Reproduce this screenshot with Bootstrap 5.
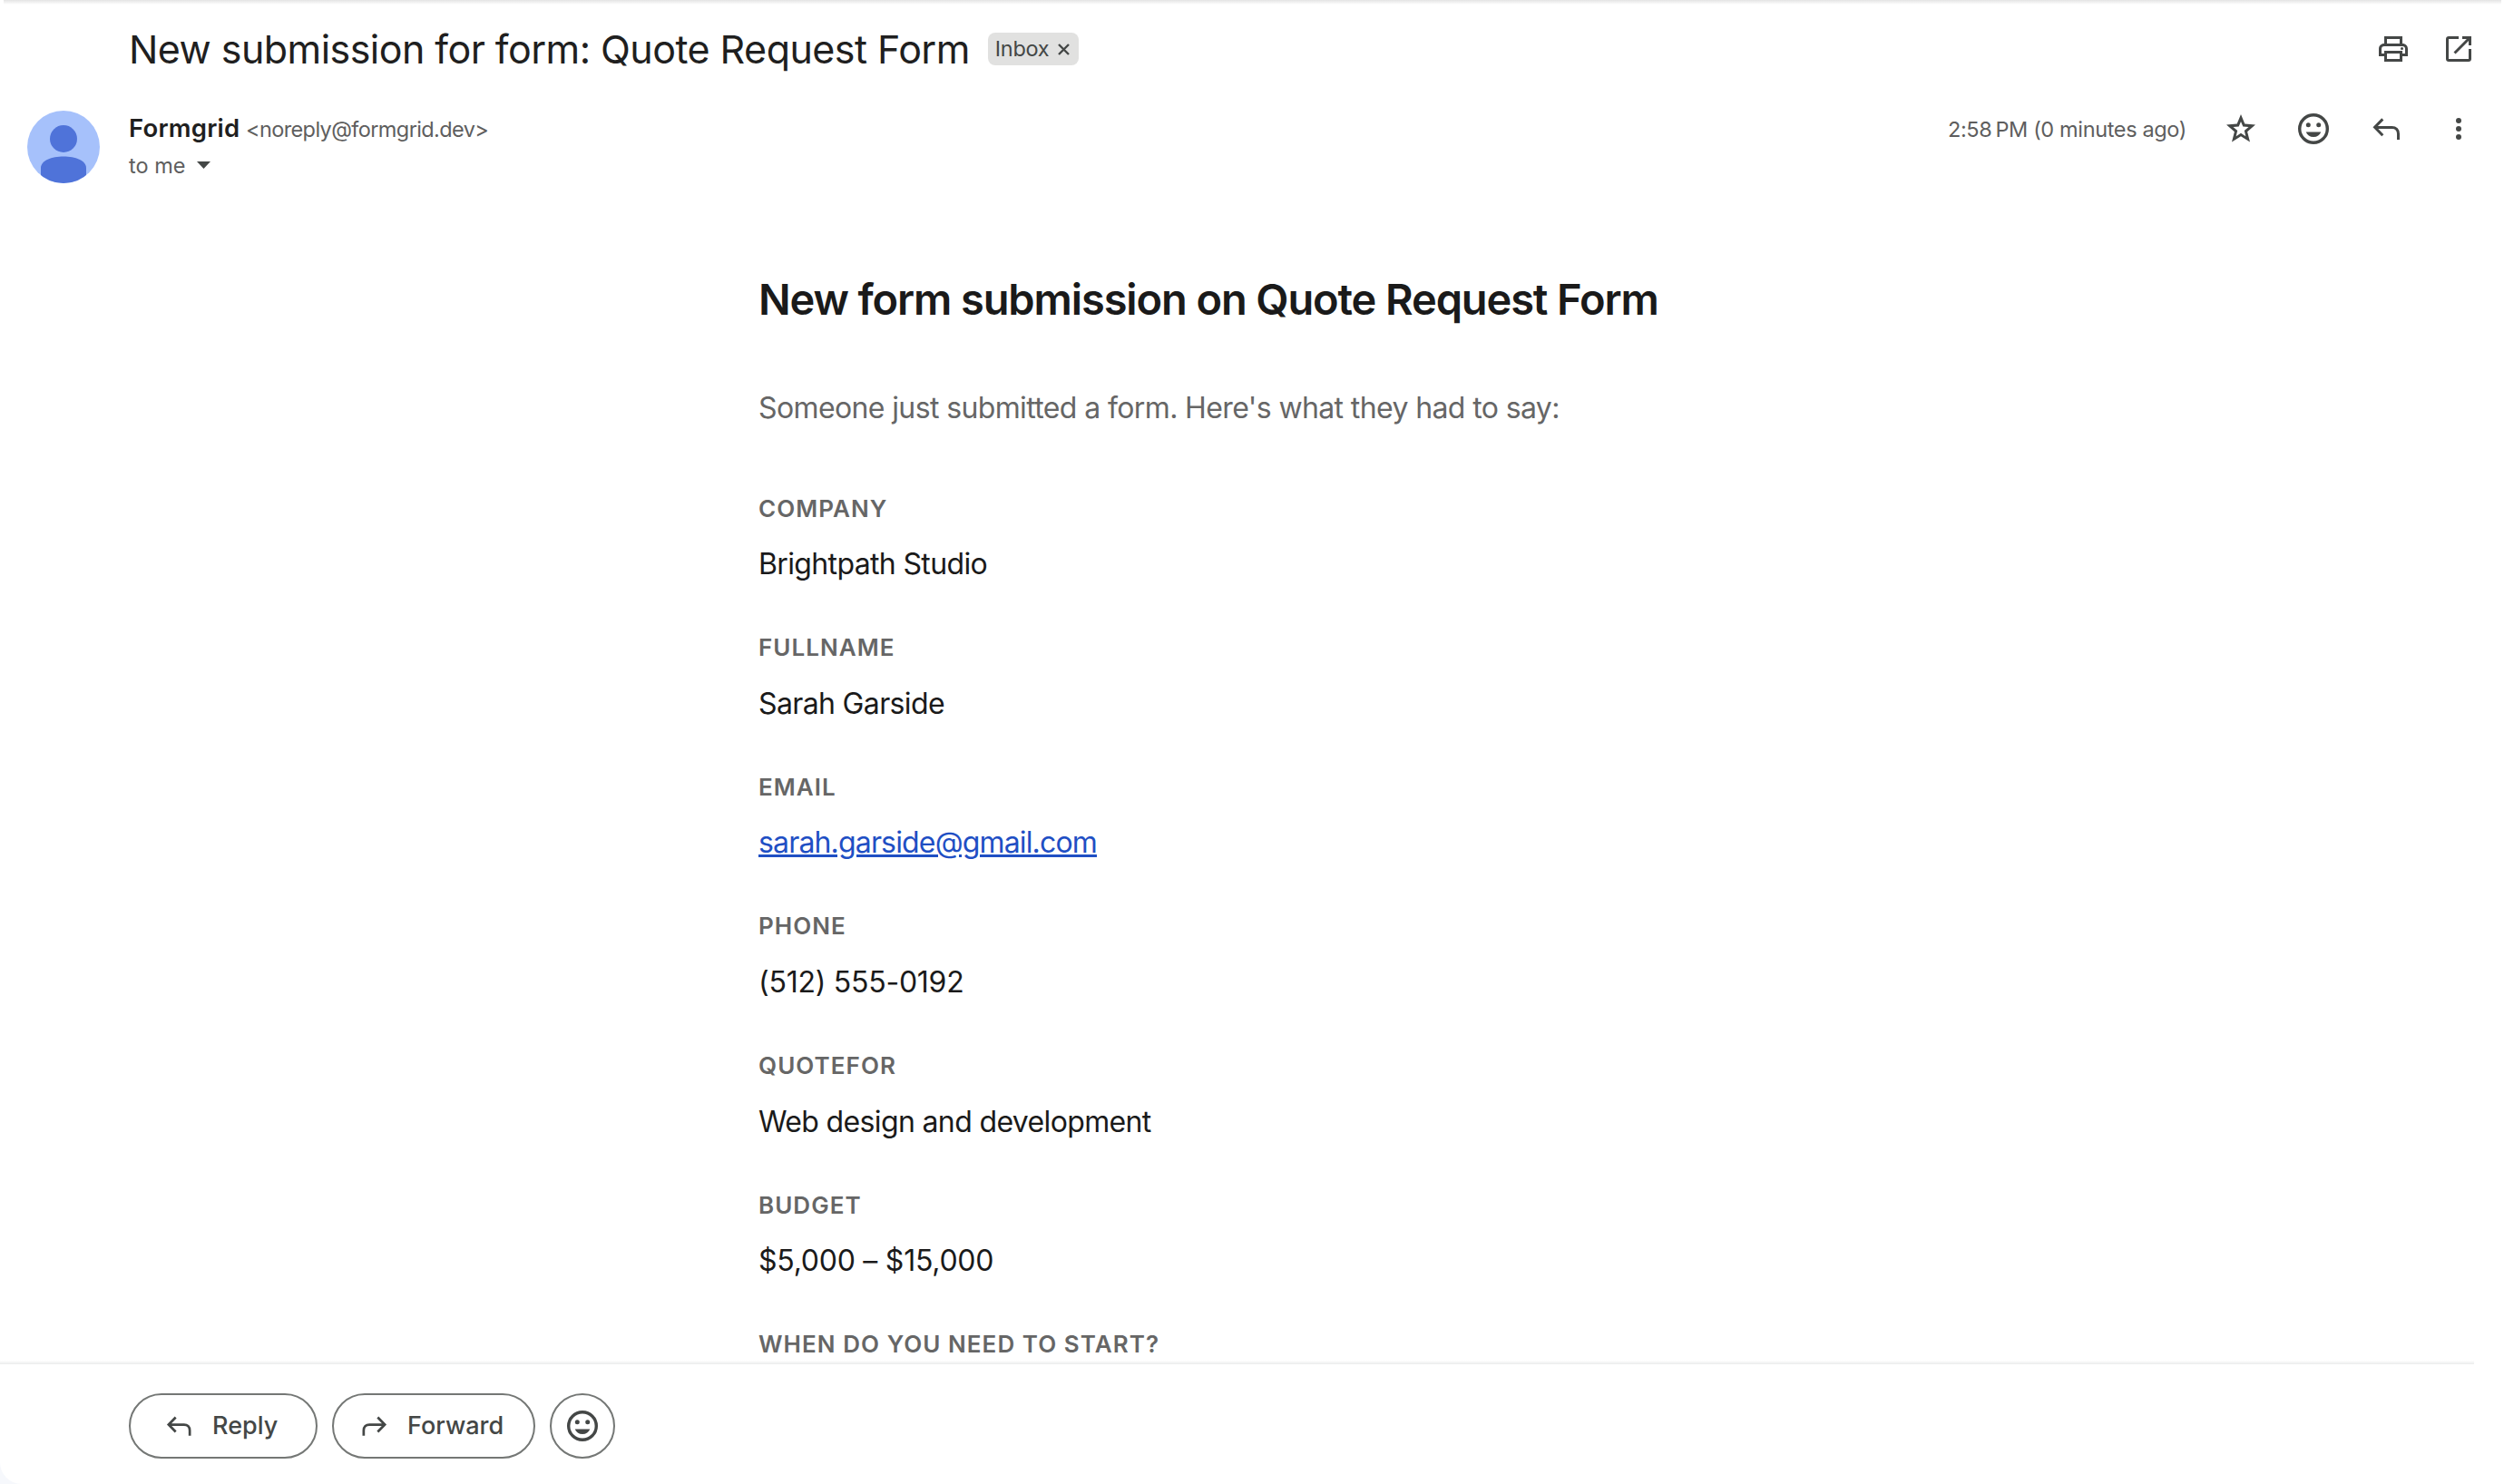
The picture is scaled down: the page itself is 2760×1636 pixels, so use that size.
<!DOCTYPE html>
<html lang="en">
<head>
    <meta charset="UTF-8">
    <meta name="viewport" content="width=device-width, initial-scale=1.0">
    <title>New submission for form: Quote Request Form</title>
    <!-- Bootstrap CSS -->
    <link href="https://cdn.jsdelivr.net/npm/bootstrap@5.3.0/dist/css/bootstrap.min.css" rel="stylesheet">
    <style>
        body { font-family: Inter, "Liberation Sans", sans-serif; color: #1f1f1f; background: #f6f8fc; }
        .mail-page { height: 1636px; background: #fff; border-bottom-left-radius: 24px; }
        .icon { width: 40px; height: 40px; fill: #444746; display: block; flex: none; }
        .icon-btn { padding: 0; border: 0; background: none; }

        /* Scroll shadows */
        .top-shadow { height: 5px; margin: 0 3px 0 4px; background: linear-gradient(#e4e4e4, #fff); }
        .bottom-shadow { height: 4px; margin-right: 33px; background: linear-gradient(#fff, #eaebeb); }

        /* Subject line */
        .subject-bar { height: 103px; padding: 0 30px 5px 142px; }
        .subject-text { font-size: 43px; line-height: 56px; font-weight: 400; letter-spacing: -0.55px; }
        .subject-tools { gap: 32px; }
        .inbox-tag { height: 36px; margin-left: 20px; padding: 0 10px 0 8px; border-radius: 8px; background: #e1e1e0; color: #444746; font-size: 23.5px; letter-spacing: -0.3px; gap: 10px; }
        .inbox-tag svg { width: 13px; height: 13px; stroke: #444746; stroke-width: 2.4; }

        /* Sender */
        .sender-row { padding: 14px 30px 0; }
        .avatar { width: 80px; height: 80px; margin-right: 32px; }
        .sender-line { height: 40px; line-height: 41px; font-size: 23.5px; color: #5e5e5e; }
        .sender-name { font-size: 27.5px; line-height: 1; font-weight: 600; color: #1f1f1f; letter-spacing: 0.2px; }
        .sender-mail { letter-spacing: -0.6px; }
        .sent-time { letter-spacing: -0.36px; }
        .sender-tools { height: 40px; gap: 40px; }
        .caret { width: 15px; height: 8px; margin-left: 13px; fill: #444746; }

        /* Message body */
        .mail-body { padding: 98px 0 0 836px; min-height: 0; }
        .mail-title { font-size: 47px; line-height: 60px; font-weight: 600; color: #1a1a1a; letter-spacing: -1.12px; }
        .mail-intro { margin: 64px 0 64.4px; font-size: 32px; line-height: 51.2px; color: #666; letter-spacing: -0.62px; }
        .field-label { margin-bottom: 15px; font-size: 26px; line-height: 41.6px; font-weight: 600; color: #666; letter-spacing: 1.05px; text-transform: uppercase; }
        .field-value { margin-bottom: 45.8px; font-size: 32px; line-height: 51.2px; color: #1a1a1a; letter-spacing: -0.64px; }
        .field-value.numeric { letter-spacing: -0.25px; }
        .field-value a { color: #1f4fc4; text-decoration-thickness: 3px; letter-spacing: -0.84px; }

        /* Reply bar */
        .reply-bar { height: 132px; padding: 32px 0 0 142px; gap: 16px; }
        .pill-btn { height: 72px; border: 2px solid #747775; border-radius: 36px; padding: 0; background: #fff; color: #444746; font-size: 27px; font-weight: 500; }
        .pill-reply { width: 208px; padding-left: 35px; gap: 19px; }
        .pill-forward { width: 224px; padding-left: 27px; gap: 18px; }
        .pill-reply .icon, .pill-forward .icon { width: 36px; height: 36px; }
        .pill-emoji { width: 72px; }
        .flip { transform: scaleX(-1); }
    </style>
</head>
<body>
    <svg class="d-none" xmlns="http://www.w3.org/2000/svg">
        <symbol id="i-smile" viewBox="0 0 40 40">
            <circle cx="20" cy="20" r="15.3" fill="none" stroke="#444746" stroke-width="3.4"/>
            <circle cx="14.3" cy="15.8" r="2.5"/><circle cx="25.7" cy="15.8" r="2.5"/>
            <path d="M11.7 23.5h16.6c-1.3 3.5-4.3 5.5-8.300 5.500s-7-2-8.300-5.500z"/>
        </symbol>
        <symbol id="i-reply" viewBox="0 0 40 40">
            <path d="M33.500 32v-6.500c0-4.300-2.700-7.100-7-7.100H8M16.300 9.400 7.600 18.300l8.700 8.900" fill="none" stroke="#444746" stroke-width="3"/>
        </symbol>
    </svg>

    <div class="mail-page d-flex flex-column overflow-hidden">
        <div class="top-shadow flex-shrink-0"></div>

        <!-- Subject -->
        <header class="subject-bar d-flex align-items-center flex-shrink-0">
            <h1 class="subject-text mb-0">New submission for form: Quote Request Form</h1>
            <span class="inbox-tag d-flex align-items-center">Inbox
                <svg viewBox="0 0 13 13"><path d="M1 1l11 11M12 1 1 12"/></svg>
            </span>
            <div class="subject-tools d-flex ms-auto">
                <button class="icon-btn" aria-label="Print">
                    <svg class="icon" viewBox="0 0 40 40"><path d="M10 6h20v8h-3V9H13v5h-3zM10 14h20c3.500 0 6 2.500 6 6v8h-6v6H10v-6H4v-8c0-3.500 2.500-6 6-6zm0 3c-2 0-3 1-3 3v5h3v-3h20v3h3v-5c0-2-1-3-3-3zm3 8v6h14v-6z" fill-rule="evenodd"/><circle cx="29.500" cy="19.500" r="1.500"/></svg>
                </button>
                <button class="icon-btn" aria-label="Open in new window">
                    <svg class="icon" viewBox="0 0 40 40"><path d="M20 6v3H9v22h22V20h3v11c0 1.700-1.300 3-3 3H9c-1.700 0-3-1.300-3-3V9c0-1.700 1.300-3 3-3zM24 6h10v10h-3v-4.900L16.600 25.500l-2.100-2.100L28.900 9H24z"/></svg>
                </button>
            </div>
        </header>

        <!-- Sender -->
        <section class="sender-row d-flex flex-shrink-0">
            <svg class="avatar" viewBox="0 0 80 80">
                <defs><clipPath id="face"><circle cx="40" cy="40" r="40"/></clipPath></defs>
                <g clip-path="url(#face)">
                    <rect width="80" height="80" fill="#a6c1fb"/>
                    <circle cx="40" cy="31" r="15" fill="#4f73d9"/>
                    <path d="M15 80V63c0-8 12-12.500 25-12.500S65 55 65 63v17z" fill="#4f73d9"/>
                </g>
            </svg>
            <div>
                <div class="sender-line"><span class="sender-name">Formgrid</span> <span class="sender-mail">&lt;noreply@formgrid.dev&gt;</span></div>
                <div class="sender-line d-flex align-items-center">to me
                    <svg class="caret" viewBox="0 0 15 8"><path d="M0 0h15L7.500 8z"/></svg>
                </div>
            </div>
            <div class="sender-tools d-flex align-items-center ms-auto">
                <span class="sender-line sent-time">2:58&#8239;PM (0 minutes ago)</span>
                <button class="icon-btn" aria-label="Star">
                    <svg class="icon" viewBox="0 0 40 40"><path fill-rule="evenodd" d="M20 4l4.300 10.600L36 15.600l-8.900 7.600L30 34.600l-10-6.300-10 6.300 2.900-11.400L4 15.600l11.700-1zM20 11.900l-2.300 5.700-6.200.5 4.700 4-1.500 6.100 5.300-3.400 5.300 3.400-1.500-6.100 4.700-4-6.200-.5z"/></svg>
                </button>
                <button class="icon-btn" aria-label="Add reaction"><svg class="icon"><use href="#i-smile"/></svg></button>
                <button class="icon-btn" aria-label="Reply"><svg class="icon"><use href="#i-reply"/></svg></button>
                <button class="icon-btn" aria-label="More">
                    <svg class="icon" viewBox="0 0 40 40"><circle cx="20" cy="11" r="3"/><circle cx="20" cy="20" r="3"/><circle cx="20" cy="29" r="3"/></svg>
                </button>
            </div>
        </section>

        <!-- Message -->
        <main class="mail-body flex-grow-1 overflow-hidden">
            <h2 class="mail-title mb-0">New form submission on Quote Request Form</h2>
            <p class="mail-intro">Someone just submitted a form. Here's what they had to say:</p>
            <div class="field-label">Company</div>
            <div class="field-value">Brightpath Studio</div>
            <div class="field-label">Fullname</div>
            <div class="field-value">Sarah Garside</div>
            <div class="field-label">Email</div>
            <div class="field-value"><a href="mailto:sarah.garside@gmail.com">sarah.garside@gmail.com</a></div>
            <div class="field-label">Phone</div>
            <div class="field-value numeric">(512) 555-0192</div>
            <div class="field-label">Quotefor</div>
            <div class="field-value">Web design and development</div>
            <div class="field-label">Budget</div>
            <div class="field-value numeric">$5,000 – $15,000</div>
            <div class="field-label mb-0">When do you need to start?</div>
        </main>
        <div class="bottom-shadow flex-shrink-0"></div>

        <!-- Actions -->
        <footer class="reply-bar d-flex flex-shrink-0">
            <button class="pill-btn pill-reply d-flex align-items-center"><svg class="icon"><use href="#i-reply"/></svg>Reply</button>
            <button class="pill-btn pill-forward d-flex align-items-center"><svg class="icon flip"><use href="#i-reply"/></svg>Forward</button>
            <button class="pill-btn pill-emoji d-flex align-items-center justify-content-center" aria-label="Add reaction"><svg class="icon"><use href="#i-smile"/></svg></button>
        </footer>
    </div>

    <!-- Bootstrap JS -->
    <script src="https://cdn.jsdelivr.net/npm/bootstrap@5.3.0/dist/js/bootstrap.bundle.min.js"></script>
</body>
</html>
